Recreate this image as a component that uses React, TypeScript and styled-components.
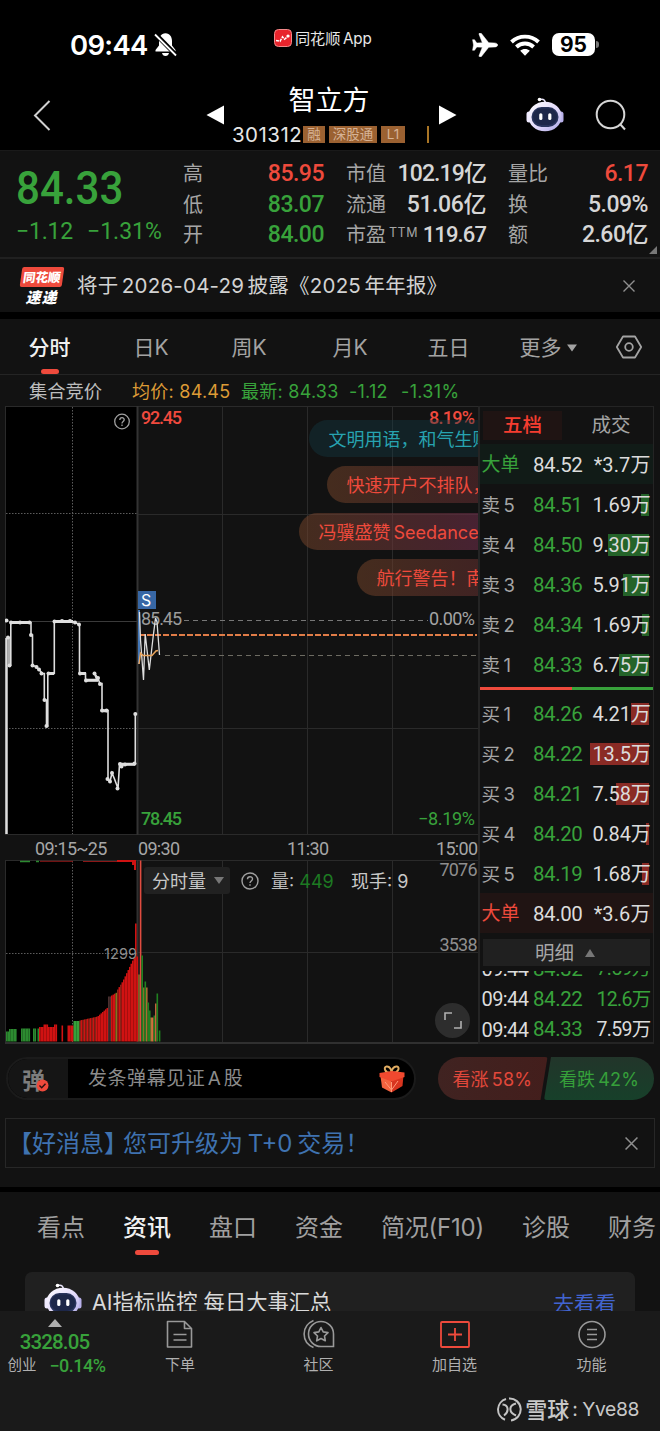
import React from "react";
import styled, { createGlobalStyle, css } from "styled-components";

const RED = "#ee4a3c";
const GREEN = "#38a23b";
const SANS = `Inter, "Noto Sans CJK SC", sans-serif`;
const CJK = `"Noto Sans CJK SC", sans-serif`;
const DIN = `Roboto, "Noto Sans CJK SC", sans-serif`;

const Global = createGlobalStyle`
  * { box-sizing: border-box; }
  body { margin: 0; background: #000; }
`;

const Page = styled.main`
  width: 660px;
  height: 1431px;
  overflow: hidden;
  display: flex;
  flex-direction: column;
  background: #121212;
  color: #d4d4d4;
  font-family: ${SANS};
  font-size: 20px;
  line-height: 1;
  white-space: nowrap;
`;

const Text = styled.span<{ $s?: number; $c?: string; $w?: number; $ls?: number; $ws?: number; $cjk?: boolean }>`
  font-size: ${(p) => p.$s ?? 20}px;
  color: ${(p) => p.$c ?? "#a6a6a6"};
  font-weight: ${(p) => p.$w ?? 400};
  letter-spacing: ${(p) => p.$ls ?? 0}px;
  word-spacing: ${(p) => p.$ws ?? 0}px;
  line-height: 1.3;
  padding-top: 2px;
  ${(p) => p.$cjk && css`font-family: ${CJK};`}
`;

const Num = styled(Text)`
  font-family: ${DIN};
`;

/* ---------- status bar and title ---------- */

const StatusBar = styled.header`
  flex: none;
  height: 78px;
  background: #000;
  display: grid;
  grid-template-columns: 204px 240px 28px 1fr;
  padding-left: 70px;
`;
const Clock = styled.div`
  display: flex;
  align-items: center;
  height: 89px;
  gap: 6px;
  color: #fff;
`;
const Source = styled.div`
  display: flex;
  align-items: center;
  height: 76px;
  gap: 3px;
`;
const StatusIcons = styled.div`
  display: flex;
  align-items: center;
  height: 89px;
  grid-column: 3 / 5;
  margin-left: -42px;
`;
const Battery = styled.div`
  width: 43px;
  height: 23px;
  margin-left: 12px;
  border-radius: 7px;
  background: #fff;
  color: #000;
  font-weight: 700;
  font-size: 21px;
  line-height: 23px;
  text-align: center;
`;
const BatteryTip = styled.div`
  width: 3px;
  height: 7px;
  margin-left: 1px;
  border-radius: 0 3px 3px 0;
  background: #777;
`;
const TitleBar = styled.div`
  flex: none;
  height: 72px;
  background: #000;
  display: grid;
  grid-template-columns: 32px 173px 25px 200px 33px 63px 38px 31px 32px;
  align-items: center;
  padding-top: 1px;
  > svg { display: block; }
`;
const NextArrow = styled.svg`
  margin-left: 8px;
`;
const Titles = styled.div`
  display: flex;
  flex-direction: column;
  height: 71px;
  padding-top: 4px;
`;
const StockName = styled.h1`
  margin: 0;
  height: 39px;
  line-height: 36px;
  color: #fff;
  font-weight: 400;
  font-size: 27px;
  text-align: center;
  padding-right: 2px;
`;
const CodeLine = styled.div`
  display: flex;
  align-items: center;
  height: 24px;
  gap: 4px;
  padding-left: 2px;
`;
const Tag = styled.span<{ $p?: number }>`
  height: 17px;
  padding: 0 ${(p) => p.$p ?? 4}px;
  background: #9b6131;
  color: #d6b295;
  font: 13.5px/17px ${SANS};
`;
const Tick = styled.i`
  width: 2px;
  height: 17px;
  margin-left: 18px;
  background: #a97525;
`;

/* ---------- quote ---------- */

const Quote = styled.section`
  flex: none;
  height: 109px;
  border-top: 1px solid #1a1a1a;
  border-bottom: 2px solid #202020;
  display: grid;
  grid-template-columns: 161px 141px 140px 140px;
  column-gap: 22px;
  position: relative;
`;
const Price = styled.div`
  padding: 14px 0 0 16px;
  display: flex;
  flex-direction: column;
`;
const Big = styled.span`
  font: 500 47px/46px ${DIN};
  color: ${GREEN};
  transform: scaleX(0.895);
  transform-origin: left;
  width: 120px;
`;
const Change = styled.div`
  display: flex;
  gap: 14px;
  margin-top: 4px;
`;
const Stats = styled.dl`
  margin: 0;
  padding-top: 7px;
  display: flex;
  flex-direction: column;
`;
const Stat = styled.div`
  height: 30.4px;
  display: flex;
  justify-content: space-between;
  align-items: center;
`;
const Sup = styled.sup`
  font-size: 12.5px;
  letter-spacing: 0.5px;
  margin-left: 3px;
  vertical-align: 5px;
  line-height: 0;
`;
const Corner = styled.svg`
  position: absolute;
  right: 3px;
  bottom: 3px;
`;

/* ---------- notice ---------- */

const Notice = styled.section`
  flex: none;
  height: 53px;
  display: grid;
  grid-template-columns: 57px 546px 13px;
  padding-left: 20px;
  align-items: center;
`;
const Express = styled.div`
  display: flex;
  flex-direction: column;
  align-items: center;
  width: 43px;
  font-family: ${CJK};
  font-style: italic;
  font-weight: 900;
  color: #fff;
`;
const ExpressTop = styled.div`
  width: 42px;
  height: 20px;
  background: ${RED};
  transform: skewX(-8deg);
  border-radius: 2px;
  font-size: 12.5px;
  line-height: 19px;
  text-align: center;
  font-style: normal;
`;
const ExpressBottom = styled.div`
  font-size: 15px;
  line-height: 17px;
  margin-top: 1px;
  letter-spacing: 1px;
`;
const Gap = styled.div<{ $h: number }>`
  flex: none;
  height: ${(p) => p.$h}px;
  background: #000;
`;

/* ---------- period tabs ---------- */

const Periods = styled.nav`
  flex: none;
  height: 56px;
  border-bottom: 1px solid #242424;
  display: grid;
  grid-template-columns: 105px 98px 101px 95px 92px 95px 28px;
  padding-left: 28.5px;
  align-items: center;
`;
const Period = styled.div<{ $on?: boolean }>`
  height: 55px;
  padding-top: 2px;
  display: flex;
  align-items: center;
  gap: 5px;
  position: relative;
  color: ${(p) => (p.$on ? "#f0f0f0" : "#a3a3a3")};
  font-weight: ${(p) => (p.$on ? 500 : 400)};
  font-size: 21px;
`;
const Underline = styled.i<{ $w: number }>`
  position: absolute;
  left: 12px;
  bottom: 0;
  width: ${(p) => p.$w}px;
  height: 5px;
  border-radius: 3px;
  background: ${RED};
`;
const Summary = styled.div`
  flex: none;
  height: 31px;
  display: flex;
  align-items: center;
  padding-left: 29px;
  padding-top: 1px;
`;

/* ---------- chart block ---------- */

const Trading = styled.section`
  flex: none;
  height: 638px;
  margin: 0 5px;
  display: grid;
  grid-template-columns: 473px 177px;
`;
const Charts = styled.div`
  display: flex;
  flex-direction: column;
  position: relative;
  overflow: hidden;
  svg { display: block; flex: none; }
`;
const TimeAxis = styled.div`
  height: 25px;
  flex: none;
  display: grid;
  grid-template-columns: 103px 149px 130px 1fr;
  padding-left: 30px;
  align-items: center;
`;
const Bubble = styled.div<{ $x: number; $y: number; $bg: string; $c: string }>`
  position: absolute;
  left: ${(p) => p.$x}px;
  top: ${(p) => p.$y}px;
  width: 240px;
  height: 37px;
  padding: 1px 0 0 19.5px;
  border-radius: 19px;
  background: ${(p) => p.$bg};
  color: ${(p) => p.$c};
  font-size: 18px;
  line-height: 37px;
  word-spacing: -2px;
`;
const VolumeBar = styled.div`
  position: absolute;
  left: 139px;
  top: 461px;
  display: flex;
  align-items: center;
  height: 27px;
`;
const Select = styled.div`
  width: 86px;
  height: 27px;
  padding: 0 6px 0 8px;
  margin-right: 11px;
  border-radius: 3px;
  background: #212121;
  display: flex;
  align-items: center;
  justify-content: space-between;
`;
const Expand = styled.div`
  position: absolute;
  left: 430px;
  top: 597px;
  width: 35px;
  height: 35px;
  border-radius: 50%;
  background: #2d2d2d;
  display: flex;
  align-items: center;
  justify-content: center;
`;

/* ---------- order book ---------- */

const Book = styled.aside`
  border: 2px solid #242424;
  border-right-width: 1px;
  border-top-width: 1px;
  display: flex;
  flex-direction: column;
  margin-right: 1px;
  overflow: hidden;
`;
const BookTabs = styled.div`
  flex: none;
  height: 37px;
  padding: 4px 3px 4px 3px;
  display: grid;
  grid-template-columns: 79px 1fr;
`;
const BookTab = styled.div<{ $on?: boolean }>`
  display: flex;
  align-items: center;
  justify-content: center;
  padding-left: ${(p) => (p.$on ? 0 : 10)}px;
  font-size: 19.5px;
  font-weight: ${(p) => (p.$on ? 500 : 400)};
  color: ${(p) => (p.$on ? "#f63d30" : "#a3a3a3")};
  background: ${(p) => (p.$on ? "#1f1413" : "none")};
`;
const Level = styled.div<{ $bg?: string }>`
  flex: none;
  height: 40px;
  padding: 0 2.5px 0 1.5px;
  display: grid;
  grid-template-columns: 51.5px 52px 1fr;
  align-items: center;
  background: ${(p) => p.$bg ?? "none"};
`;
const Amount = styled.div`
  position: relative;
  display: flex;
  justify-content: flex-end;
  align-items: center;
  height: 22px;
`;
const AmountBar = styled.i<{ $w: number; $c: string }>`
  position: absolute;
  right: 2px;
  top: 1px;
  width: ${(p) => p.$w}px;
  height: 22px;
  background: ${(p) => p.$c};
`;
const AmountText = styled(Num)`
  position: relative;
`;
const Ratio = styled.div`
  flex: none;
  height: 3px;
  margin: 3px 0;
  background: linear-gradient(90deg, ${RED} 53%, ${GREEN} 53%);
`;
const DetailHead = styled.div`
  flex: none;
  height: 27px;
  margin: 6px 3px 5px;
  background: #202020;
  display: flex;
  align-items: center;
  justify-content: center;
  gap: 11px;
  padding-right: 3px;
`;
const Details = styled.div`
  flex: 1;
  min-height: 0;
  overflow: hidden;
  display: flex;
  flex-direction: column;
  justify-content: flex-end;
  margin-bottom: -2px;
`;
const Detail = styled.div`
  flex: none;
  height: 30.4px;
  padding: 0 2.5px 0 1.5px;
  display: grid;
  grid-template-columns: 51.5px 54px 1fr;
  align-items: center;
  > :last-child { text-align: right; }
`;

/* ---------- comments and sentiment ---------- */

const Social = styled.section`
  flex: none;
  height: 74px;
  padding: 13px 7px 0 6px;
  display: flex;
  justify-content: space-between;
`;
const Comment = styled.div`
  width: 410px;
  height: 43px;
  border: 2px solid #1b1b1b;
  border-radius: 22px;
  background: #000;
  overflow: hidden;
  display: flex;
  align-items: center;
`;
const CommentToggle = styled.div`
  width: 60px;
  height: 100%;
  background: #151515;
  display: flex;
  align-items: center;
  padding-left: 14px;
  margin-right: 20px;
`;
const Check = styled.svg`
  margin-left: -9px;
  margin-top: 13px;
`;
const Sentiment = styled.div`
  display: grid;
  grid-template-columns: 106.5px 109px;
`;
const Side = styled.div<{ $up?: boolean }>`
  height: 43px;
  width: 110px;
  display: flex;
  align-items: center;
  padding-left: 15px;
  color: ${(p) => (p.$up ? "#e2483b" : "#36a03a")};
  background: ${(p) => (p.$up ? "linear-gradient(90deg,#402321,#431e1c)" : "linear-gradient(180deg,#22352a,#17402a)")};
  border-radius: ${(p) => (p.$up ? "22px 3px 3px 22px" : "3px 22px 22px 3px")};
  clip-path: ${(p) => (p.$up ? "polygon(0 0, 110px 0, 103px 100%, 0 100%)" : "polygon(7px 0, 100% 0, 100% 100%, 0 100%)")};
`;
const Promo = styled.section`
  flex: none;
  height: 50px;
  margin: 0 5px 19px;
  padding: 0 16px 0 2px;
  border: 1px solid #272727;
  display: flex;
  align-items: center;
  justify-content: space-between;
`;
const Bracket = styled.span`
  letter-spacing: -5px;
`;

/* ---------- information ---------- */

const InfoTabs = styled.nav`
  flex: none;
  height: 80px;
  display: flex;
  gap: 38px;
  padding-left: 37px;
  overflow: hidden;
`;
const InfoTab = styled.div<{ $on?: boolean }>`
  flex: none;
  position: relative;
  height: 63px;
  line-height: 71px;
  font-size: 24px;
  font-weight: ${(p) => (p.$on ? 500 : 400)};
  color: ${(p) => (p.$on ? "#f0f0f0" : "#a0a0a0")};
  &:nth-child(5) { letter-spacing: -0.22px; }
`;
const Card = styled.section`
  flex: none;
  height: 39px;
  margin: 0 25px;
  padding: 11px 19px 0;
  border-radius: 7px 7px 0 0;
  background: #202020;
  overflow: hidden;
  display: flex;
  align-items: flex-start;
`;
const CardText = styled.div`
  flex: 1;
  margin-left: 10px;
  margin-top: 6px;
`;
const BottomBar = styled.footer`
  flex: none;
  height: 120px;
  background: #1a1a1a;
  display: grid;
  grid-template-columns: 109px 142px 135px 137px 137px;
  grid-template-rows: 76px 1fr;
`;
const IndexCell = styled.div`
  display: flex;
  flex-direction: column;
  align-items: center;
  padding-top: 8px;
  > svg { display: block; }
`;
const IndexRow = styled.div`
  display: flex;
  align-items: center;
  gap: 13px;
  margin-left: 4px;
  margin-top: -4px;
`;
const Action = styled.div`
  display: flex;
  flex-direction: column;
  align-items: center;
  padding-top: 8px;
  gap: 6px;
  font-size: 15px;
  color: #b0b0b0;
  line-height: 20px;
  > svg { display: block; }
`;
const Watermark = styled.div`
  grid-column: 1 / 6;
  display: flex;
  align-items: center;
  justify-content: flex-end;
  gap: 3px;
  padding: 0 21px 0 0;
  height: 44px;
`;

/* ---------- drawings ---------- */

const Robot = ({ w, id }: { w: number; id: string }) => (
  <svg width={w} height={(w * 35) / 38} viewBox="0 0 38 35">
    <defs>
      <linearGradient id={id} x1="0" y1="0" x2="1" y2="1">
        <stop offset="0" stopColor="#ffffff" />
        <stop offset="0.55" stopColor="#e2d9fb" />
        <stop offset="1" stopColor="#a9a6e4" />
      </linearGradient>
    </defs>
    <path d="M14 2.500c4-1 5 1 5.500 4" stroke="#e9e4fa" strokeWidth="1.700" fill="none" />
    <circle cx="13.500" cy="2.500" r="1.800" fill="#fff" />
    <rect x="0.500" y="14.500" width="5" height="11" rx="2.500" fill="#efeaff" />
    <rect x="32.500" y="14.500" width="5" height="11" rx="2.500" fill="#b8b0ea" />
    <ellipse cx="19" cy="19.500" rx="16.700" ry="14.700" fill={`url(#${id})`} />
    <rect x="5.500" y="10" width="27" height="20" rx="10" fill="#29345c" />
    <rect x="7" y="11.500" width="24" height="16.500" rx="8.200" fill="#1d2749" />
    <rect x="13.200" y="16.300" width="3.200" height="6.800" rx="1.500" fill="#fff" />
    <rect x="22.200" y="16.300" width="3.200" height="6.800" rx="1.500" fill="#fff" />
  </svg>
);

const Cross = ({ s }: { s: number }) => (
  <svg width={s} height={s} viewBox="0 0 12 12" stroke="#8f8f8f" strokeWidth="1.400">
    <path d="M.5.5l11 11M11.500.5l-11 11" />
  </svg>
);

const Help = ({ s = 18 }: { s?: number }) => (
  <svg width={s} height={s} viewBox="0 0 18 18" fill="none" stroke="#a0a0a0" strokeWidth="1.400">
    <circle cx="9" cy="9" r="8" />
    <path d="M6.500 7.200C6.500 3.800 11.600 4 11.500 7c0 1.900-2.500 2-2.500 4M9 12.300v1.500" />
  </svg>
);

const auctionPath =
  "M9 637V665H10.800V622.500H31V635H32.500V665.500L36 666.500L38.500 669L42 673V673.500H44.300V700H46.500V726H47.800V673.500H54.300V621.500H73L79.500 624.500V673.500H85.500V680.500H97L94.500 673.500L97.500 677.500L100 683.500H102V710.500H108V779L110 781.500L112 773L114.500 779L118 788.500L119.500 764.500H135.300V714";
const auctionDots: number[][] = [
  [6.5, 620.5], [8, 637.5], [9.5, 665.5], [11, 622.5], [20, 622.5], [29.5, 622.5], [31, 635], [32.5, 665.5],
  [36.5, 667], [39, 669.5], [41.5, 673.5], [44.5, 700], [46.5, 726], [48.5, 673.5], [54.5, 621.5], [62, 621],
  [70, 621], [75, 622.5], [79, 624.5], [80, 673.5], [86, 680.5], [94.5, 673.5], [98, 678], [100, 684], [102, 710.5],
  [106.5, 710.5], [107.5, 779], [110, 781.5], [112, 773], [117.5, 788.5], [120, 764], [121.5, 766.5], [125, 764.5],
  [134.5, 763.5], [135.3, 714],
];

const PriceChart = () => (
  <svg width="474" height="429" viewBox="5 406 474 429" fill="none">
    <rect x="5" y="406" width="132" height="429" fill="#000" />
    <g stroke="#2a2a2a">
      <path d="M5 406.500H479M5 834.500H479M5.500 406V835M138 514.500H478M138 728.500H478M222.500 406V835M307.500 406V835M392.500 406V835" />
      <path d="M6 621.500H138" stroke="#3a3a3a" />
      <path d="M137.500 406V835" stroke="#333" strokeWidth="2" />
    </g>
    <path d="M72.500 407V834M6 513.500H137M6 728.500H137" stroke="#5c5c5c" strokeDasharray="1.500 1.500" />
    <path d="M184 620.500H428" stroke="#777" strokeDasharray="5 4" />
    <path d="M139 635H477" stroke="#e07c47" strokeWidth="1.800" strokeDasharray="6 2" />
    <path d="M165 655.500H477" stroke="#6d6b62" strokeDasharray="5 4" />
    <path d="M6.500 834V638" stroke="#dedede" strokeWidth="2.500" />
    <path d={auctionPath} stroke="#dedede" strokeWidth="1.600" />
    <path d="M11 622.500H30M55 621.500H73M80 673.500H86M86 680.300H98M102 710.700H108M120 764.200H135M49 673.500H54" stroke="#dedede" strokeWidth="3" />
    {auctionDots.map(([x, y], i) => (
      <circle key={i} cx={x} cy={y} r="2" fill="#dedede" />
    ))}
    <g fontFamily={DIN} fontSize="18">
      <text x="141" y="424" fill="#f04a3e" fontWeight="500" textLength="41">92.45</text>
      <text x="475" y="424" fill="#f04a3e" fontWeight="500" textAnchor="end" textLength="46">8.19%</text>
      <text x="141" y="624.500" fill="#9c9c9c" textLength="41">85.45</text>
      <text x="475" y="624.500" fill="#a4a4a4" textAnchor="end" textLength="46">0.00%</text>
      <text x="141" y="824.500" fill={GREEN} fontWeight="500" textLength="41">78.45</text>
      <text x="475" y="824.500" fill={GREEN} textAnchor="end" textLength="57">−8.19%</text>
    </g>
    <path d="M139 610V664" stroke="#4377b8" strokeWidth="2" />
    <path d="M139.500 612L140.500 640L141.500 653L143.500 680L145.200 634L149.300 670L153 638L155.500 618L157 622L159.500 655" stroke="#dedede" strokeWidth="1.300" />
    <path d="M139 664L140.500 653L143 655.500H152L156 651L158 650.500" stroke="#e9a45c" strokeWidth="1.500" />
    <rect x="138" y="591" width="18" height="18" fill="#3767a5" />
    <text x="141" y="606" fontFamily={SANS} fontSize="16" fill="#fff">S</text>
    <g transform="translate(114 413)" stroke="#a0a0a0" strokeWidth="1.300">
      <circle cx="8" cy="8.500" r="7.300" />
      <path d="M5.800 7C5.800 3.800 10.300 4 10.200 6.700c0 1.800-2.200 1.800-2.200 3.700M8 11.500v1.400" />
    </g>
  </svg>
);

const G = "#2c8a30";
const R = "#d01212";
const D = "#8a2418";
const bars: [number, number, string][] = [];
for (let x = 6; x < 137; x += 1.5) {
  if (x < 16) bars.push([x, x < 8 ? 10 : 12.5, G]);
  else if (x < 20) continue;
  else if (x < 30) bars.push([x, 13, G]);
  else if (x < 39) { if ((x > 32 && x < 35) || x > 36.5) bars.push([x, 13, G]); }
  else if (x < 57) bars.push([x, x > 43 && x < 48 ? 17 : x > 53 ? 17 : 14.5, R]);
  else if (x < 61) continue;
  else if (x < 63) bars.push([x, 16, R]);
  else if (x < 67) continue;
  else if (x < 73) bars.push([x, 16, R]);
  else if (x < 79) bars.push([x, 20.5, "#35a13a"]);
  else if (x < 97) bars.push([x, 21 + (x - 79) * 0.22, [R, D, R][Math.floor(x) % 3]]);
  else if (x < 107) bars.push([x, 25 + (x - 97) * 0.9, R]);
  else if (x < 111) bars.push([x, 45, "#4a3030"]);
  else if (x < 117) bars.push([x, 46 + (x - 111) * 0.6, x > 114 ? "#7d7a22" : R]);
  else if (x < 123) bars.push([x, 52 + (x - 117) * 1.6, Math.floor(x) % 3 ? R : D]);
  else if (x < 134) bars.push([x, 62 + (x - 123) * 2.1, R]);
  else bars.push([x, x < 135.5 ? 118 : 85, R]);
}
const openBars: [number, number, string][] = [
  [138.2, 67, "#86702a"], [139.8, 181, "#e04c40"], [141.4, 86, "#208020"], [143, 54, "#86702a"],
  [144.5, 60, "#208020"], [146, 54, "#a86c30"], [147.5, 39, "#208020"], [149, 31, "#208020"],
  [150.5, 24, "#b4783a"], [152, 24, "#d8683c"], [153.5, 26, "#208020"], [155, 38, "#c4603a"], [156.5, 48, "#208020"],
  [158.8, 11, "#208020"],
];

const VolumeChart = () => (
  <svg width="474" height="184" viewBox="5 860 474 184" fill="none">
    <rect x="5" y="860" width="132" height="184" fill="#000" />
    <path d="M5 860.500H479M5.500 860V1043M138 952.500H478M222.500 860V1043M307.500 860V1043M392.500 860V1043" stroke="#2a2a2a" />
    <path d="M5 1043H479M137.500 860V1043" stroke="#303030" strokeWidth="2" />
    <path d="M72.500 861V1042M6 953.500H137" stroke="#5c5c5c" strokeDasharray="1.500 1.500" />
    {[...bars, ...openBars].map(([x, h, c], i) => (
      <rect key={i} x={x} y={1041.5 - h} width="1.600" height={h} fill={c} />
    ))}
    <path d="M20 861.500H30M36 861.500H39" stroke={G} strokeWidth="1.500" />
    <path d="M40 861.300H73M83 861.500H127" stroke="#8c1717" />
    <path d="M117 860H136V870H134V865H132V862H117Z" fill={R} />
    <g fill="#8e8e8e">
      <text x="104" y="959" fontFamily={SANS} fontSize="14.500" textLength="33">1299</text>
      <text x="477.500" y="876" fontFamily={DIN} fontSize="18" textAnchor="end" textLength="38">7076</text>
      <text x="477.500" y="951" fontFamily={DIN} fontSize="18" textAnchor="end" textLength="38">3538</text>
    </g>
  </svg>
);

type Row = [string, string, string, number];
const sells: Row[] = [
  ["卖 5", "84.51", "1.69万", 8],
  ["卖 4", "84.50", "9.30万", 41],
  ["卖 3", "84.36", "5.91万", 26],
  ["卖 2", "84.34", "1.69万", 7],
  ["卖 1", "84.33", "6.75万", 30],
];
const buys: Row[] = [
  ["买 1", "84.26", "4.21万", 18],
  ["买 2", "84.22", "13.5万", 59],
  ["买 3", "84.21", "7.58万", 33],
  ["买 4", "84.20", "0.84万", 3],
  ["买 5", "84.19", "1.68万", 7],
];

const BookRow = ({ row, bar }: { row: Row; bar: string }) => (
  <Level>
    <Text $s={18.5} $ls={-0.3} $ws={-1}>{row[0]}</Text>
    <Num $s={20.5} $c={GREEN} $ls={-0.4}>{row[1]}</Num>
    <Amount>
      <AmountBar $w={row[3]} $c={bar} />
      <AmountText $s={20} $c="#dcdcdc" $ls={-0.2}>{row[2]}</AmountText>
    </Amount>
  </Level>
);

const BigOrder = ({ color, bg, price, amount }: { color: string; bg: string; price: string; amount: string }) => (
  <Level $bg={bg}>
    <Text $s={19} $c={color}>大单</Text>
    <Num $s={20.5} $c="#dcdcdc" $ls={-0.4}>{price}</Num>
    <Amount>
      <AmountText $s={20} $c="#dcdcdc" $ls={0.1}>{amount}</AmountText>
    </Amount>
  </Level>
);

const StatLine = ({ k, v, c = "#d6d6d6", sup, ls = -0.5 }: { k: string; v: string; c?: string; sup?: string; ls?: number }) => (
  <Stat>
    <Text $s={20}>{k}{sup && <Sup>{sup}</Sup>}</Text>
    <Num $s={sup ? 22 : 23} $c={c} $w={500} $ls={ls}>{v}</Num>
  </Stat>
);

export default function App() {
  return (
    <Page>
      <Global />
      <StatusBar>
        <Clock>
          <Text $s={27.5} $c="#fff" $w={600} $ls={-0.7}>09:44</Text>
          <svg width="23" height="25" viewBox="0 0 23 25">
            <path d="M11.500 1.200C7 1.200 5 5 5 9v4.500L1.500 18v1.500h20V18L18 13.500V9c0-4-2-7.800-6.500-7.800zM8 21h7c-.5 2-1.500 3-3.500 3S8.500 23 8 21z" fill="#fff" />
            <path d="M1 1.500L22 23" stroke="#000" strokeWidth="4.500" />
            <path d="M1 2.500L22 23.500" stroke="#fff" strokeWidth="1.800" />
          </svg>
        </Clock>
        <Source>
          <svg width="18" height="18" viewBox="0 0 18 18">
            <rect x="0.500" y="0.500" width="17" height="17" rx="4" fill="#e8242c" stroke="#f38a8a" />
            <path d="M2 11.500l4 .8 2.500-4.500 2 2.500L15 6.500" stroke="#fff" strokeWidth="1.500" fill="none" strokeDasharray="3 1" />
            <circle cx="14" cy="7" r="1.600" fill="#fff" />
          </svg>
          <Text $s={15.2} $c="#e8e8e8" $ls={-0.1} $ws={-1.5}>同花顺 App</Text>
        </Source>
        <StatusIcons>
          <svg width="26" height="24" viewBox="0 0 26 24" fill="#fff" stroke="#fff" strokeWidth="0.500">
            <path d="M9.200.3H7.600c-.6 0-.8.4-.6.9L10.300 9.800 4.800 10 2.500 6.700H.6l.9 5.300-.9 5.300h1.900L4.800 14l5.500.2L7 22.800c-.2.5 0 .9.6.9h1.600L16.700 14.300l5.300-.2c2.600-.1 3.700-1 3.700-2.100S24.600 10 22 9.900l-5.300-.2z" />
          </svg>
          <svg width="30" height="22" viewBox="0 0 30 22" fill="none" stroke="#fff" strokeWidth="3.900" style={{ marginLeft: 12 }}>
            <path d="M1.500 8C9 .8 21 .8 28.500 8" />
            <path d="M6.400 13C11.200 8.400 18.800 8.400 23.600 13" />
            <path d="M15 21.700l-4.800-4.900c2.700-2.500 6.900-2.500 9.600 0z" fill="#fff" stroke="none" />
          </svg>
          <Battery>95</Battery>
          <BatteryTip />
        </StatusIcons>
      </StatusBar>

      <TitleBar>
        <i />
        <svg width="20" height="32" viewBox="0 0 20 32" fill="none" stroke="#d0d0d0" strokeWidth="2">
          <path d="M17.500 2L3 16.500 17.500 31" />
        </svg>
        <svg width="20" height="20" viewBox="0 0 20 20" fill="#fff"><path d="M1.500 10L19 0.500V19.500z" /></svg>
        <Titles>
          <StockName>智立方</StockName>
          <CodeLine>
            <Text $s={20.5} $c="#e6e6e6" $ls={0.45}>301312</Text>
            <Tag style={{ marginLeft: -3 }}>融</Tag>
            <Tag>深股通</Tag>
            <Tag $p={5.5}>L1</Tag>
            <Tick />
          </CodeLine>
        </Titles>
        <NextArrow width="20" height="20" viewBox="0 0 20 20" fill="#fff"><path d="M18.500 10L1 0.500V19.500z" /></NextArrow>
        <i />
        <Robot w={38} id="headTop" />
        <i />
        <svg width="32" height="32" viewBox="0 0 32 32" fill="none" stroke="#d6d6d6" strokeWidth="2">
          <circle cx="15.500" cy="15.500" r="13.800" />
          <path d="M25 25l5 5.500" />
        </svg>
      </TitleBar>

      <Quote>
        <Price>
          <Big>84.33</Big>
          <Change>
            <Num $s={23} $c={GREEN} $ls={-0.2}>−1.12</Num>
            <Num $s={23} $c={GREEN} $ls={0}>−1.31%</Num>
          </Change>
        </Price>
        <Stats>
          <StatLine k="高" v="85.95" c={RED} />
          <StatLine k="低" v="83.07" c={GREEN} />
          <StatLine k="开" v="84.00" c={GREEN} />
        </Stats>
        <Stats>
          <StatLine k="市值" v="102.19亿" ls={-0.9} />
          <StatLine k="流通" v="51.06亿" ls={-0.4} />
          <StatLine k="市盈" sup="TTM" v="119.67" ls={-0.9} />
        </Stats>
        <Stats>
          <StatLine k="量比" v="6.17" c={RED} />
          <StatLine k="换" v="5.09%" />
          <StatLine k="额" v="2.60亿" />
        </Stats>
        <Corner width="8" height="8" viewBox="0 0 8 8"><path d="M8 0V8H0z" fill="#777" /></Corner>
      </Quote>

      <Notice>
        <Express>
          <ExpressTop>同花顺</ExpressTop>
          <ExpressBottom>速递</ExpressBottom>
        </Express>
        <Text $s={20.5} $c="#d2d2d2" $ls={0.22} $ws={-2.6}>将于 2026-04-29 披露《2025 年年报》</Text>
        <Cross s={12} />
      </Notice>
      <Gap $h={7} />

      <Periods>
        <Period $on>分时<Underline $w={18} /></Period>
        <Period>日K</Period>
        <Period>周K</Period>
        <Period>月K</Period>
        <Period>五日</Period>
        <Period>更多<svg width="10" height="8" viewBox="0 0 10 8"><path d="M0 .5H10L5 7.500z" fill="#a3a3a3" /></svg></Period>
        <svg width="28" height="24" viewBox="0 0 28 24" fill="none" stroke="#a3a3a3" strokeWidth="1.800">
          <path d="M8 1.500H20L26.200 12 20 22.500H8L1.800 12z" strokeLinejoin="round" />
          <circle cx="14" cy="12" r="3.800" />
        </svg>
      </Periods>
      <Summary>
        <Text $s={18.3} $c="#bdbdbd" style={{ width: 103 }}>集合竞价</Text>
        <Text $s={18} $c="#dd9b36" $ls={0.25} style={{ width: 109 }}>均价: 84.45</Text>
        <Text $s={18} $c={GREEN} $ls={0.25} style={{ width: 108 }}>最新: 84.33</Text>
        <Text $s={18} $c={GREEN} $ls={0.25} style={{ width: 52 }}>-1.12</Text>
        <Text $s={18} $c={GREEN} $ls={0.35}>-1.31%</Text>
      </Summary>

      <Trading>
        <Charts>
          <PriceChart />
          <Bubble $x={304} $y={14} $bg="rgba(20,60,70,.4)" $c="#27a3b0">文明用语，和气生财</Bubble>
          <Bubble $x={322} $y={60} $bg="linear-gradient(90deg,rgba(120,70,42,.5),rgba(105,48,52,.52) 60%)" $c={RED}>快速开户不排队，</Bubble>
          <Bubble $x={294} $y={107} $bg="linear-gradient(90deg,rgba(120,70,42,.5),rgba(105,48,62,.6) 60%,rgba(110,40,90,.6))" $c={RED}>冯骥盛赞 Seedance</Bubble>
          <Bubble $x={352} $y={153} $bg="linear-gradient(90deg,rgba(120,70,42,.5),rgba(105,48,52,.52) 60%)" $c={RED}>航行警告！南海</Bubble>
          <TimeAxis>
            <Num $s={18} $ls={-0.7}>09:15~25</Num>
            <Num $s={18} $ls={-0.7}>09:30</Num>
            <Num $s={18} $ls={-0.7}>11:30</Num>
            <Num $s={18} $ls={-0.7} style={{ marginLeft: 19 }}>15:00</Num>
          </TimeAxis>
          <VolumeChart />
          <VolumeBar>
            <Select>
              <Text $s={18} $c="#c8c8c8">分时量</Text>
              <svg width="10" height="7" viewBox="0 0 10 7"><path d="M0 0H10L5 7z" fill="#777" /></svg>
            </Select>
            <Help />
            <Text $s={18} $c="#bdbdbd" style={{ marginLeft: 12, width: 80 }}>量: <Text $s={18} $c="#1d7a22">449</Text></Text>
            <Text $s={18} $c="#c8c8c8">现手: 9</Text>
          </VolumeBar>
          <Expand>
            <svg width="18" height="17" viewBox="0 0 18 17" fill="none" stroke="#b0b0b0" strokeWidth="1.600">
              <path d="M1 8V1H8M17 9V16H10" />
            </svg>
          </Expand>
        </Charts>

        <Book>
          <BookTabs>
            <BookTab $on>五档</BookTab>
            <BookTab>成交</BookTab>
          </BookTabs>
          <BigOrder color={GREEN} bg="#111b17" price="84.52" amount="*3.7万" />
          {sells.map((r) => <BookRow key={r[0]} row={r} bar="#246329" />)}
          <Ratio />
          {buys.map((r) => <BookRow key={r[0]} row={r} bar="#8a2b25" />)}
          <BigOrder color={RED} bg="#201413" price="84.00" amount="*3.6万" />
          <DetailHead>
            <Text $s={19.5}>明细</Text>
            <svg width="10" height="8" viewBox="0 0 10 8"><path d="M5 0L10 8H0z" fill="#777" /></svg>
          </DetailHead>
          <Details>
            {[["84.32", "7.59万", GREEN], ["84.22", "12.6万", GREEN], ["84.33", "7.59万", "#dcdcdc"]].map(([p, a, c]) => (
              <Detail key={p}>
                <Num $s={20} $c="#dcdcdc" $ls={-0.6}>09:44</Num>
                <Num $s={20.5} $c={GREEN} $ls={-0.4}>{p}</Num>
                <Num $s={19.5} $c={c} $ls={-0.7}>{a}</Num>
              </Detail>
            ))}
          </Details>
        </Book>
      </Trading>

      <Social>
        <Comment>
          <CommentToggle>
            <Text $s={23} $w={700} $c="#7d7d7d" $cjk>弹</Text>
            <Check width="13" height="13" viewBox="0 0 13 13">
              <circle cx="6.500" cy="6.500" r="6" fill={RED} />
              <path d="M3.500 6.500l2.200 2.200 3.800-4" stroke="#2a1010" strokeWidth="1.400" fill="none" />
            </Check>
          </CommentToggle>
          <Text $s={19} $c="#8c8c8c" $ls={0.55} $ws={-3.5} style={{ width: 290 }}>发条弹幕见证 A 股</Text>
          <svg width="28" height="28" viewBox="0 0 28 28" style={{ flex: "none" }}>
            <path d="M13.500 8C7 9 5 2 8.500 1.500S13.500 5 13.500 8c0-3 2-7 5.500-6.500S20 9 13.500 8z" fill="none" stroke="#e0ac62" strokeWidth="2" />
            <path d="M2.500 11l11 3.500v13L4 22.500z" fill="#f4633f" />
            <path d="M25.500 10l-12 4.500v13L24.500 21z" fill="#d8351f" />
            <path d="M1.500 8L14 6l12.500 1.500v4.500l-13 4.500L1.500 12z" fill="#f0492f" />
            <path d="M7 17l6.500 8M20 16l-6.500 9M13.500 17V27" stroke="#ff9878" strokeWidth="1" fill="none" />
          </svg>
        </Comment>
        <Sentiment>
          <Side $up><Text $s={18} $c="inherit" $ls={0.1} $ws={-2}>看涨 58%</Text></Side>
          <Side><Text $s={18} $c="inherit" $ls={0.1} $ws={-2}>看跌 42%</Text></Side>
        </Sentiment>
      </Social>
      <Promo>
        <Text $s={24} $c="#3f72b0" $ws={-2}>【好消息<Bracket>】</Bracket>您可升级为 T+0 交易！</Text>
        <Cross s={13} />
      </Promo>
      <Gap $h={5} />

      <InfoTabs>
        <InfoTab>看点</InfoTab>
        <InfoTab $on>资讯<Underline $w={24} /></InfoTab>
        <InfoTab>盘口</InfoTab>
        <InfoTab>资金</InfoTab>
        <InfoTab>简况(F10)</InfoTab>
        <InfoTab>诊股</InfoTab>
        <InfoTab>财务</InfoTab>
      </InfoTabs>
      <Card>
        <Robot w={38} id="headCard" />
        <CardText><Text $s={21.3} $c="#dadada">AI指标监控 每日大事汇总</Text></CardText>
        <Text $s={21} $c="#4264d0" style={{ marginTop: 5 }}>去看看</Text>
      </Card>

      <BottomBar>
        <IndexCell>
          <svg width="14" height="8" viewBox="0 0 14 8"><path d="M7 0L14 8H0z" fill="#b0b0b0" /></svg>
          <Num $s={20.5} $c={GREEN} $w={500} $ls={-0.9}>3328.05</Num>
          <IndexRow>
            <Text $s={14.5} $c="#b0b0b0">创业</Text>
            <Num $s={18} $c={GREEN} $w={500} $ls={-0.5}>−0.14%</Num>
          </IndexRow>
        </IndexCell>
        <Action>
          <svg width="28" height="30" viewBox="0 0 28 30" fill="none" stroke="#999" strokeWidth="1.600">
            <path d="M1.500 2.500h17l7 7v18.500h-24zM18.500 2.500v7h7M7.500 15.500h13M7.500 21h13" strokeLinejoin="round" />
          </svg>
          下单
        </Action>
        <Action>
          <svg width="32" height="30" viewBox="0 0 32 30" fill="none" stroke="#999" strokeWidth="1.600">
            <path d="M18 2.500a12.500 12.500 0 1 0 0 25H30.500V15A12.500 12.500 0 0 0 18 2.500z" />
            <path d="M10.500 1.500C-2 7-2 23 10.500 28.500" />
            <path d="M18 8.500l2.200 4.400 4.800.7-3.500 3.400.8 4.800-4.300-2.300-4.300 2.300.8-4.800L11 13.600l4.800-.7z" strokeLinejoin="round" />
          </svg>
          社区
        </Action>
        <Action>
          <svg width="30" height="30" viewBox="0 0 30 30" fill="none" stroke={RED} strokeWidth="1.800">
            <rect x="1" y="3" width="28" height="25" rx="1" />
            <path d="M15 9v13M8 15.500h14" />
          </svg>
          加自选
        </Action>
        <Action>
          <svg width="30" height="30" viewBox="0 0 30 30" fill="none" stroke="#999" strokeWidth="1.600">
            <circle cx="15" cy="15.500" r="13" />
            <path d="M10 10.500h10M10 15.500h10M10 20.500h10" />
          </svg>
          功能
        </Action>
        <Watermark>
          <svg width="25" height="25" viewBox="0 0 25 25" fill="none" stroke="#c4c4c4" strokeWidth="2">
            <path d="M8 22.800A11 11 0 0 1 9 2M12 1.500A11 11 0 0 1 14 23.400" />
            <path d="M5.500 7.500C12 8 12 15 7 18.500M19 6.500c-8 2-7 9.500 0 12" />
          </svg>
          <Text $s={22} $w={500} $c="#c8c8c8">雪球</Text>
          <Text $s={19.3} $c="#c8c8c8" $ls={-0.4}>: Yve88</Text>
        </Watermark>
      </BottomBar>
    </Page>
  );
}
